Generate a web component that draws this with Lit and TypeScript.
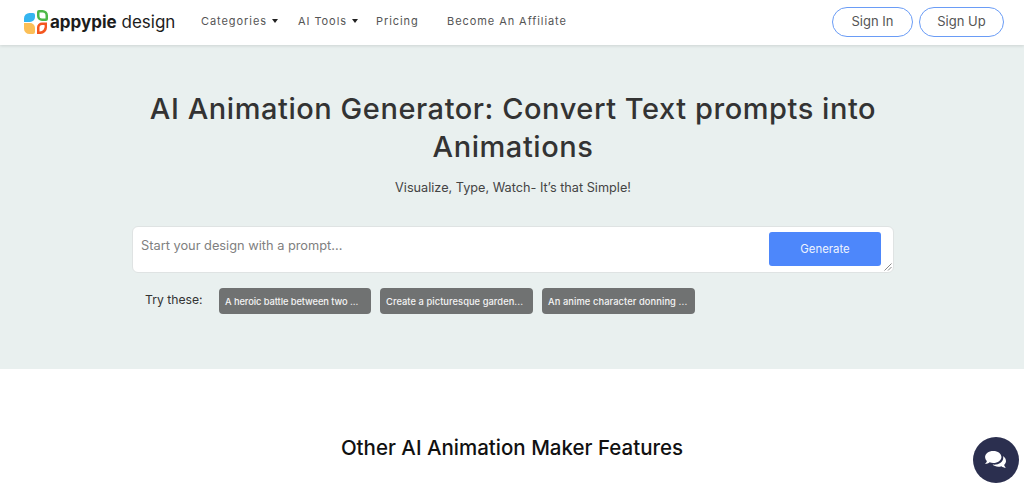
import { LitElement, html, css } from "lit";
import { customElement } from "lit/decorators.js";

@customElement("app-root")
export class AppRoot extends LitElement {
  static styles = css`
    :host { display: block; width: 1024px; height: 487px; overflow: hidden; position: relative; background: #fff; font-family: Inter, "Liberation Sans", sans-serif; color: #333; }
    header { height: 45px; display: flex; align-items: center; background: #fff; box-shadow: 0 1px 3px rgba(0,0,0,.12); position: relative; padding: 0 20px 2px 24px; box-sizing: border-box; }
    .logo { display: flex; align-items: center; width: 177px; flex: none; gap: 2px; }
    .brand { font-size: 17px; color: #1c1c1c; white-space: nowrap; }
    .brand b { font-weight: 700; }
    nav { display: flex; align-items: center; font-size: 11px; letter-spacing: .93px; color: #555; white-space: nowrap; padding-bottom: 1px; }
    .n1 { width: 97px; } .n2 { width: 78px; } .n3 { width: 71px; }
    nav span { display: inline-flex; align-items: center; }
    .caret { width: 0; height: 0; border-left: 3px solid transparent; border-right: 3px solid transparent; border-top: 4px solid #222; margin-left: 5px; }
    .auth { margin-left: auto; display: flex; gap: 6px; }
    .auth a { height: 30px; box-sizing: border-box; border: 1px solid #6a9cf6; border-radius: 15px; display: flex; align-items: center; justify-content: center; font-size: 13px; color: #555; padding-bottom: 2px; }
    .in { width: 81px; } .up { width: 85px; }
    .hero { height: 324px; background: #e9f0ef; display: flex; flex-direction: column; align-items: center; box-sizing: border-box; padding: 45px 0 0 2px; }
    h1 { margin: 0; font-size: 29px; letter-spacing: .55px; line-height: 38px; font-weight: 500; text-align: center; color: #333; width: 800px; }
    .sub { margin: 12px 0 0; font-size: 12.7px; line-height: 20px; color: #444; }
    .box { margin-top: 28px; width: 762px; height: 47px; box-sizing: border-box; background: #fff; border: 1px solid #dfe3e3; border-radius: 6px; display: flex; justify-content: space-between; padding: 5px 12px 0 8px; position: relative; }
    .ph { font-size: 12.8px; color: #808080; line-height: 28px; }
    .gen { width: 112px; height: 34px; background: #4d87fb; color: #eef3ff; border-radius: 3px; font-size: 11.4px; display: flex; align-items: center; justify-content: center; }
    .grip { position: absolute; right: 1px; bottom: 1px; }
    .try { width: 762px; display: flex; align-items: center; margin-top: 15px; height: 26px; padding-left: 13px; box-sizing: border-box; }
    .try label { font-size: 12.2px; color: #333; width: 74px; flex: none; padding-bottom: 4px; }
    .chips { display: flex; gap: 9px; }
    .chip { height: 26px; box-sizing: border-box; background: #707272; color: #f4f4f4; border-radius: 4px; font-size: 9.3px; font-weight: 500; display: flex; align-items: center; padding: 0 6px; white-space: nowrap; }
    .c1 { width: 152px; letter-spacing: -.07px; } .c2 { width: 153px; letter-spacing: .07px; } .c3 { width: 153px; letter-spacing: .1px; }
    h2 { margin: 0; padding-top: 66px; text-align: center; font-size: 20.5px; line-height: 26px; font-weight: 500; color: #111; }
    .chat { position: absolute; left: 973px; top: 437px; width: 46px; height: 46px; border-radius: 50%; background: #2b2f4f; display: flex; align-items: center; justify-content: center; }
  `;

  render() {
    return html`
      <header>
        <div class="logo">
          <svg width="24" height="24" viewBox="0 0 24 24">
            <path d="M0 12 V8.500 A5.500 5.500 0 0 1 5.500 3 H9 a2 2 0 0 1 2 2 V7 a5 5 0 0 1-5 5 Z" fill="#35b5f0"/>
            <path d="M13 2 a2 2 0 0 1 2-2 h3.500 A5.500 5.500 0 0 1 24 5.500 V9 a2 2 0 0 1-2 2 H18 a5 5 0 0 1-5-5 Z M15.500 2.500 V6 A2.500 2.500 0 0 0 18 8.500 h3.500 V5.500 a3 3 0 0 0-3-3 Z" fill="#4cb848" fill-rule="evenodd"/>
            <path d="M0 13 H6 a5 5 0 0 1 5 5 v4 a2 2 0 0 1-2 2 H5.500 A5.500 5.500 0 0 1 0 18.500 Z" fill="#fbbf57"/>
            <path d="M18 12.500 h5 v5 A6.500 6.500 0 0 1 16.500 24 H13 V17.500 a5 5 0 0 1 5-5 Z M18 15 a2.500 2.500 0 0 0-2.500 2.500 V21.500 A5 5 0 0 0 20.500 15 Z" fill="#f4561f" fill-rule="evenodd"/>
          </svg>
          <span class="brand"><b>appypie</b> design</span>
        </div>
        <nav>
          <span class="n1">Categories<i class="caret"></i></span>
          <span class="n2">AI Tools<i class="caret"></i></span>
          <span class="n3">Pricing</span>
          <span>Become An Affiliate</span>
        </nav>
        <div class="auth"><a class="in">Sign In</a><a class="up">Sign Up</a></div>
      </header>
      <section class="hero">
        <h1>AI Animation Generator: Convert Text prompts into Animations</h1>
        <p class="sub">Visualize, Type, Watch- It’s that Simple!</p>
        <div class="box">
          <span class="ph">Start your design with a prompt...</span>
          <div class="gen">Generate</div>
          <svg class="grip" width="8" height="8" viewBox="0 0 8 8"><path d="M7.500 .5 L.5 7.500 M7.500 4 L4 7.500" stroke="#888" fill="none"/></svg>
        </div>
        <div class="try">
          <label>Try these:</label>
          <div class="chips">
            <div class="chip c1">A heroic battle between two ...</div>
            <div class="chip c2">Create a picturesque garden...</div>
            <div class="chip c3">An anime character donning ...</div>
          </div>
        </div>
      </section>
      <h2>Other AI Animation Maker Features</h2>
      <div class="chat">
        <svg width="24" height="20" viewBox="0 0 26 22">
          <path d="M10 1 C4.800 1 1 4 1 7.800 c0 1.700 .8 3.200 2 4.400 c-.4 1.400-1.300 2.500-2 3.200 c2 0 3.800-.8 5-1.800 c1.200 .5 2.600 .8 4 .8 c5.200 0 9-3 9-6.600 C19 4 15.200 1 10 1 Z" fill="#fff"/>
          <path d="M20.500 6.500 c.3 .7 .5 1.400 .5 2 c0 4.400-4.600 7.600-10 7.600 c-.6 0-1.200 0-1.800-.1 c1.500 1.500 3.800 2.400 6.300 2.400 c1.200 0 2.400-.2 3.500-.6 c1.200 1 2.900 1.700 4.800 1.700 c-.7-.7-1.500-1.700-1.900-3 c1.400-1.200 2.100-2.700 2.100-4.300 c0-2.500-1.500-4.600-3.500-5.700 Z" fill="#fff"/>
        </svg>
      </div>
    `;
  }
}
